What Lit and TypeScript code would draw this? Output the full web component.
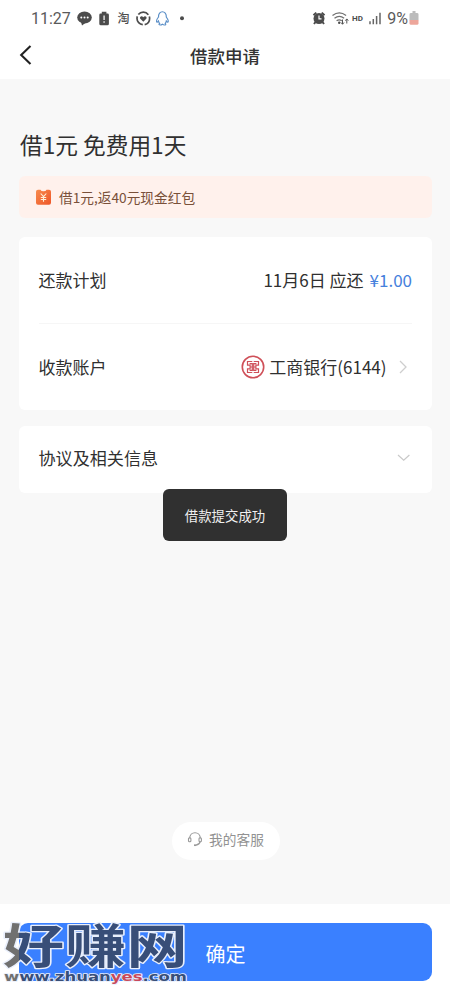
import { LitElement, html, css, svg } from "lit";
import { customElement } from "lit/decorators.js";

@customElement("status-bar")
class StatusBar extends LitElement {
  static styles = css`
    :host { display: block; height: 36px; flex: none; color: #5a5a5a; font-family: Roboto, sans-serif; }
    .bar { display: flex; justify-content: space-between; align-items: center; height: 36px; padding: 0 30px 0 31px; font-size: 16px; }
    .side { display: flex; align-items: center; }
    .side svg { display: block; }
    .clock { width: 42px; }
    .pct { margin-left: 5px; }
  `;
  render() {
    return html`<div class="bar">
      <div class="side">
        <span class="clock">11:27</span>
        <svg width="116" height="20" viewBox="73 8 116 20" fill="#4c4c4c">
          <ellipse cx="84.5" cy="17.5" rx="7.3" ry="6" />
          <path d="M81 22l1 3.6 4-3z" />
          <g fill="#fff"><circle cx="81.3" cy="17.5" r="1" /><circle cx="84.5" cy="17.5" r="1" /><circle cx="87.7" cy="17.5" r="1" /></g>
          <path d="M101.8 11.8h4.6v1.8h1.2q1.3 0 1.3 1.3v8.8q0 1.5-1.5 1.5h-6.600q-1.500 0-1.500-1.500v-8.800q0-1.300 1.300-1.300h1.200z" />
          <path d="M104.100 15.500v4.400M104.100 21.200v1.600" stroke="#ddd" stroke-width="1.500" />
          <text x="117.500" y="22.700" font-family="Noto Sans CJK SC, sans-serif" font-size="12" font-weight="500">淘</text>
          <circle cx="143.300" cy="18.400" r="6.300" fill="none" stroke="#4c4c4c" stroke-width="1.700" stroke-dasharray="11.200 2" stroke-dashoffset="3" />
          <path d="M143.300 21.800l-3.200-3.200q-.7-2.200 1.300-2.400 1.200 0 1.900 1 .7-1 1.900-1 2 .2 1.300 2.400z" />
          <path d="M158.500 17c-.5-7 8.300-7 7.800 0 1.800 2.500 2.300 4.600 1.500 5.200-.5.200-1-.6-1.500-1.200-.2 1-.6 1.800-1.100 2.400 1.200 1 .3 1.600-.7 1.600-1.200 0-1.700-.4-2.100-.8-.5.400-1 .8-2.200.8-1.100 0-1.800-.7-.6-1.600-.5-.6-.9-1.400-1.100-2.400-.5.600-1 1.400-1.500 1.200-.8-.7-.2-2.900 1.500-5.200z" fill="#fff" stroke="#5b8fc7" stroke-width="1.200" />
          <circle cx="182" cy="18.300" r="2" />
        </svg>
      </div>
      <div class="side">
        <svg width="70" height="20" viewBox="312 8 70 20" fill="#4c4c4c">
          <circle cx="319" cy="18.600" r="5.500" />
          <path d="M313.500 15.300l2.800-2.700M324.500 15.300l-2.800-2.700M315.500 22l-1.500 2M322.500 22l1.500 2" stroke="#4c4c4c" stroke-width="2" />
          <path d="M319 15.500v3.300h2.500" stroke="#fff" stroke-width="1.200" fill="none" />
          <g fill="none" stroke="#707070" stroke-width="1.300"><path d="M332.500 15.500q6.800-5.200 13.600 0M334.500 18.200q4.800-3.600 9.600 0M336.600 20.800q2.700-2 5.200 0" /></g>
          <circle cx="339.200" cy="22.800" r="1.200" />
          <path d="M342.500 19.500v4.500M341 22.500l1.500 1.800 1.500-1.800M346.800 23.500v-4.500M345.300 20.700l1.500-1.800 1.500 1.800" stroke="#555" fill="none" />
          <text x="352" y="21" font-size="8" font-weight="700" font-family="Roboto, sans-serif">HD</text>
          <path d="M370 24.300v-3M373.300 24.300v-5.300M376.600 24.300v-8.300M380 24.300v-11.500" stroke="#666" stroke-width="1.500" />
        </svg>
        <span class="pct">9%</span>
        <svg width="12" height="16" viewBox="0 0 12 16">
          <path d="M4.500 1h3v2h1.500q1.500 0 1.500 1.300v6h-9v-6q0-1.300 1.500-1.300h1.500z" fill="#bcbcbc" />
          <path d="M1.500 10h9v3.200q0 1.500-1.500 1.500h-6q-1.500 0-1.500-1.500z" fill="#eda69b" />
        </svg>
      </div>
    </div>`;
  }
}

@customElement("site-watermark")
class SiteWatermark extends LitElement {
  static styles = css`
    :host { display: block; }
    svg { display: block; overflow: visible; }
    text { paint-order: stroke; stroke: #e9effc; stroke-linejoin: round; }
    .han { font-family: "Noto Sans CJK SC", sans-serif; font-weight: 700; font-size: 47px; stroke-width: 2.500px; }
    .url { font-family: "DejaVu Sans", sans-serif; font-weight: 700; font-size: 12.500px; stroke-width: 1.600px; }
  `;
  render() {
    const glyphs = [["好", 3], ["赚", 65], ["网", 126.5]] as const;
    return html`<svg width="192" height="68" viewBox="0 918 192 68">
      <defs>
        <linearGradient id="han-ink" gradientUnits="userSpaceOnUse" x1="0" y1="0" x2="100" y2="0">
          <stop offset=".12" stop-color="#707070" /><stop offset=".12" stop-color="#384e78" />
        </linearGradient>
        <linearGradient id="url-ink" gradientUnits="userSpaceOnUse" x1="0" y1="0" x2="190" y2="0">
          <stop offset=".1" stop-color="#707070" /><stop offset=".1" stop-color="#384e78" />
        </linearGradient>
      </defs>
      ${glyphs.map(([g, x], i) => svg`<text class="han" transform="translate(${x} 962.500) scale(1.300 1)" fill=${i ? "#384e78" : "url(#han-ink)"}>${g}</text>`)}
      <text class="url" x="4" y="981" textLength="183" lengthAdjust="spacingAndGlyphs" fill="url(#url-ink)">www.zhuan<tspan fill="#c9495a">yes</tspan>.com</text>
    </svg>`;
  }
}

@customElement("app-root")
class AppRoot extends LitElement {
  static styles = css`
    :host { display: flex; flex-direction: column; position: relative; height: 1000px; overflow: hidden; background: #fff; color: #303030; font-family: "Noto Sans CJK SC", sans-serif; font-size: 17px; }
    svg { display: block; flex: none; }
    header { display: grid; grid-template-columns: 60px 1fr 60px; align-items: center; height: 43px; padding-bottom: 4px; box-sizing: border-box; flex: none; text-align: center; font-size: 17.500px; font-weight: 500; color: #333; }
    .back { margin-left: 18px; margin-top: -2px; }
    main { flex: 1; display: flex; flex-direction: column; padding: 0 18px 0 19px; background: #f8f8f8; }
    h1 { margin: 49px 0 0 1px; height: 34px; line-height: 34px; font-size: 22.700px; font-weight: 400; }
    .promo { display: flex; align-items: center; height: 42px; margin-top: 14px; padding-left: 16px; gap: 7px; border-radius: 6px; background: #fff1ec; color: #795039; font-size: 13.700px; }
    .card { background: #fff; border-radius: 6px; padding: 0 20px 0 19.500px; }
    .plan { margin-top: 19px; }
    .terms { margin-top: 16px; }
    .row { display: flex; align-items: center; justify-content: space-between; height: 86px; padding-bottom: 2px; box-sizing: border-box; }
    .row + .row { height: 87px; border-top: 1px solid #f6f6f6; }
    .terms .row { height: 67px; padding-bottom: 4px; }
    .terms .row span { font-size: 17.100px; }
    .value { display: flex; align-items: center; }
    .money { color: #4580dc; margin-left: 6px; }
    .bank { margin-right: 4.500px; margin-top: 2px; }
    .go { margin-left: 11px; margin-right: 3.500px; margin-top: 2px; }
    .service { display: flex; align-items: center; justify-content: center; gap: 6px; width: 108px; height: 38px; margin: auto auto 44px; padding-bottom: 4px; box-sizing: border-box; border-radius: 19px; background: #fff; color: #929292; font-size: 13.700px; }
    footer { flex: none; height: 96px; padding: 19px 18px 0 19px; box-sizing: border-box; }
    .submit { display: flex; align-items: center; justify-content: center; height: 58px; padding-top: 3px; box-sizing: border-box; border-radius: 9px; background: #3a80ff; color: #fff; font-size: 20px; }
    .toast { position: absolute; left: 163px; top: 489px; width: 124px; height: 52px; display: flex; align-items: center; justify-content: center; border-radius: 6px; background: #303030; color: #f0f0f0; font-size: 13.400px; }
    .mark { position: absolute; left: 0; top: 918px; }
  `;
  render() {
    return html`
      <status-bar></status-bar>
      <header>
        <svg class="back" width="16" height="24" viewBox="0 0 16 24"><path d="M12.500 3L3.200 12l9.300 9" fill="none" stroke="#222" stroke-width="2.100" /></svg>
        <span>借款申请</span>
      </header>
      <main>
        <h1>借1元 免费用1天</h1>
        <div class="promo">
          <svg width="17" height="17" viewBox="0 0 17 17">
            <defs><linearGradient id="coupon" x1="0" y1="0" x2="1" y2="1"><stop stop-color="#f78b4d" /><stop offset="1" stop-color="#ee5527" /></linearGradient></defs>
            <path d="M3 .8h2.500q.5 1.500 3 1.500t3-1.500H14q2 0 2 2v11q0 2-2 2H3q-2 0-2-2V2.800q0-2 2-2z" fill="url(#coupon)" />
            <path d="M5.700 4.500l2.800 3.200 2.800-3.200M8.500 7.700v5M5.800 8.500h5.400M5.800 10.500h5.400" fill="none" stroke="#fff0d8" stroke-width="1.100" />
          </svg>
          <span>借1元,返40元现金红包</span>
        </div>
        <section class="card plan">
          <div class="row"><span>还款计划</span><span class="value">11月6日 应还<span class="money">¥1.00</span></span></div>
          <div class="row">
            <span>收款账户</span>
            <span class="value">
              <svg class="bank" width="24" height="24" viewBox="0 0 24 24" fill="none" stroke="#cf5059">
                <circle cx="12" cy="12" r="10.700" stroke-width="1.600" />
                <path d="M11.300 6.500H6.500v3.700h2.600v3.600H6.500v3.700h4.800M12.700 6.500h4.800v3.700h-2.600v3.600h2.600v3.700h-4.800M8.600 8.600h2.700v6.800H8.600M15.400 8.600h-2.700v6.800h2.700M9.200 12h2M12.800 12h2" stroke-width="1.200" />
              </svg>
              工商银行(6144)
              <svg class="go" width="11" height="16" viewBox="0 0 11 16"><path d="M2 2l6 6-6 6" fill="none" stroke="#cecece" stroke-width="1.300" /></svg>
            </span>
          </div>
        </section>
        <section class="card terms">
          <div class="row"><span>协议及相关信息</span>
            <svg width="16" height="10" viewBox="0 0 16 10"><path d="M2 2l5.700 5.300L13.400 2" fill="none" stroke="#c9c9c9" stroke-width="1.200" /></svg>
          </div>
        </section>
        <div class="service">
          <svg width="16" height="16" viewBox="0 0 16 16" fill="none" stroke="#999" stroke-width="1.100">
            <path d="M2.700 7.500C2.700-.2 13.300-.2 13.300 7.500M13.300 10.500q-.8 3-4.300 3.600" />
            <rect x="1.500" y="6.800" width="2.400" height="4" rx="1" /><rect x="12" y="6.800" width="2.400" height="4" rx="1" />
            <path d="M7 14.200h2.200" stroke-width="1.700" />
          </svg>
          <span>我的客服</span>
        </div>
      </main>
      <footer><div class="submit">确定</div></footer>
      <div class="toast">借款提交成功</div>
      <site-watermark class="mark"></site-watermark>
    `;
  }
}
